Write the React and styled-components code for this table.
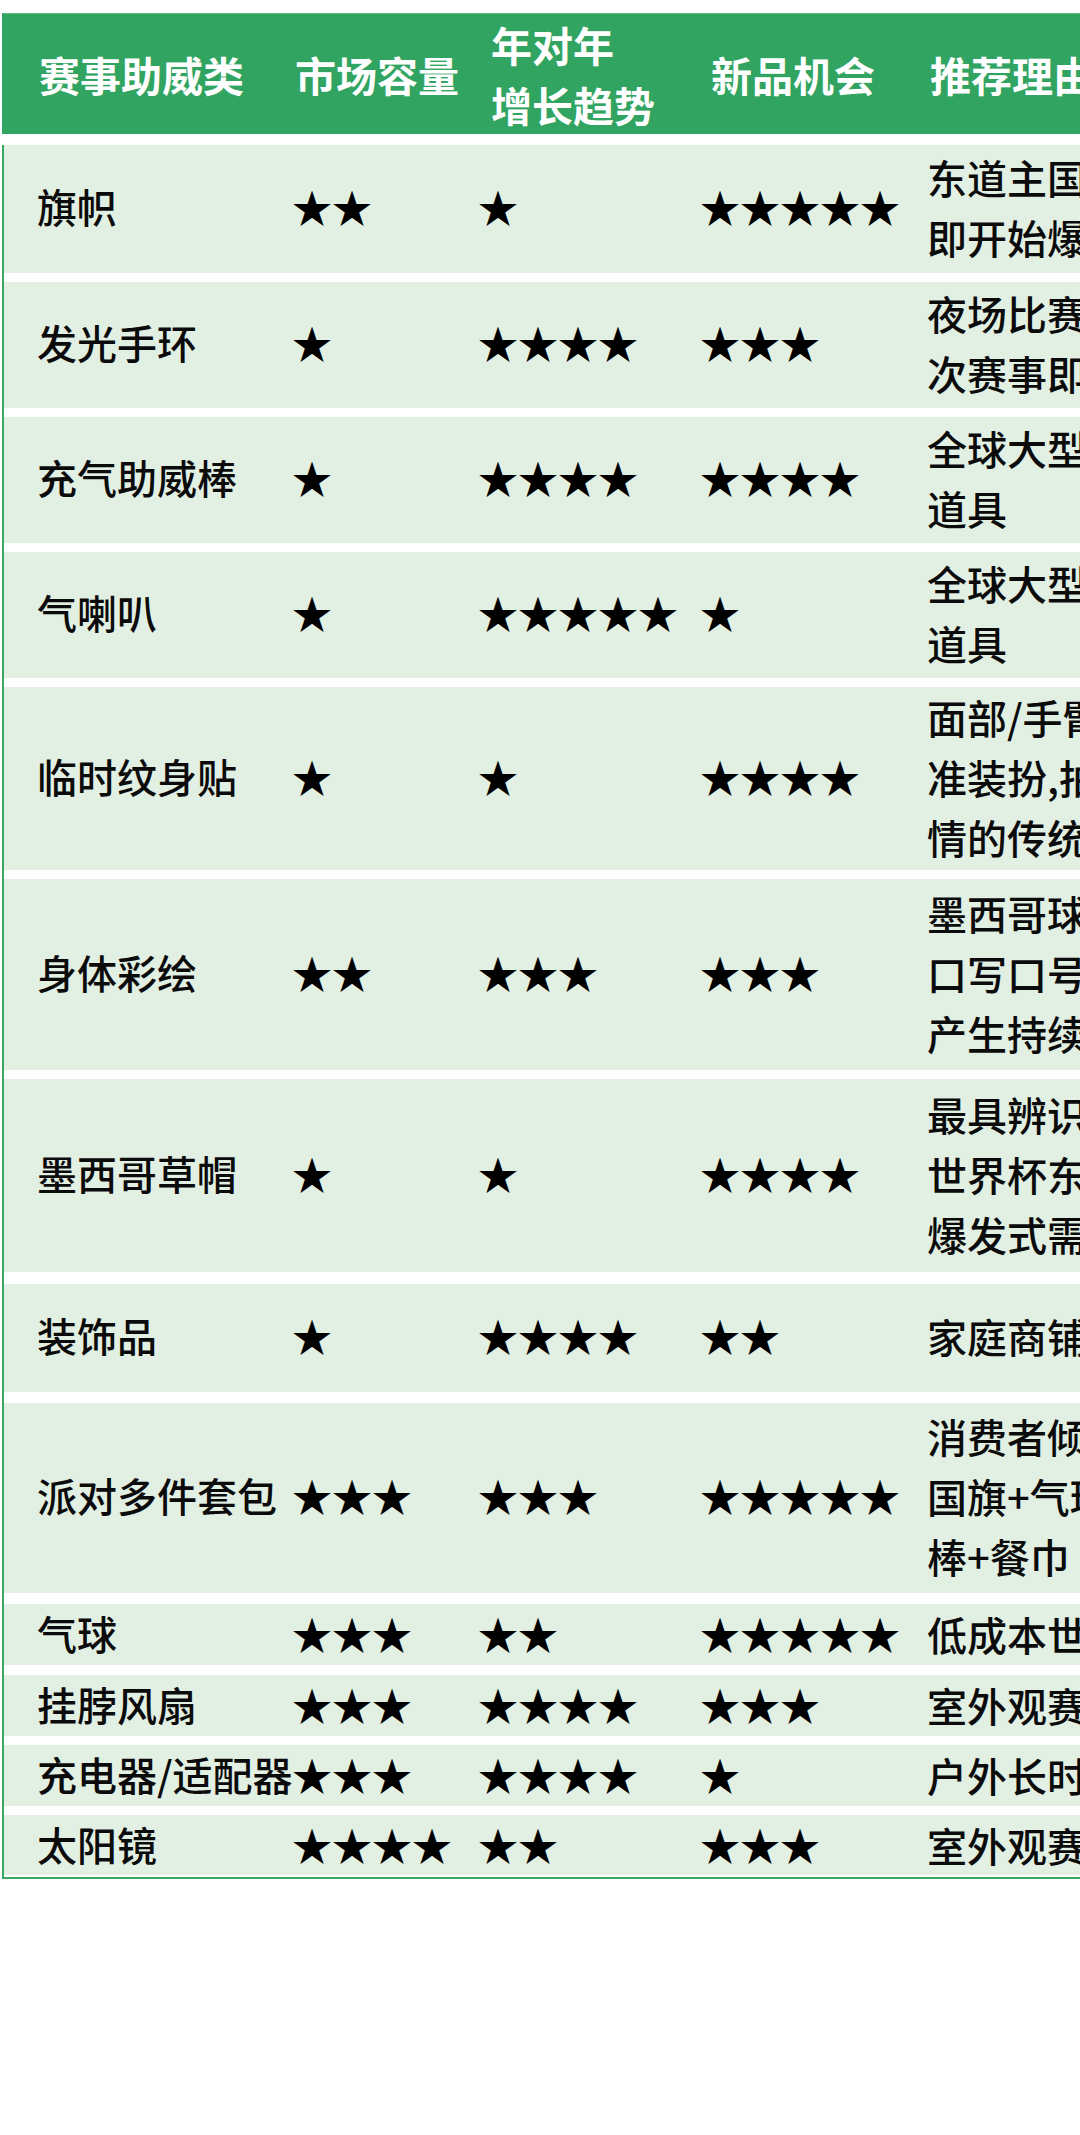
import React from "react";
import styled, { createGlobalStyle } from "styled-components";

const GlobalStyle = createGlobalStyle`
    html, body {
        margin: 0;
        padding: 0;
        background: #ffffff;
    }
    body {
        font-family: "Noto Sans CJK SC", "Noto Sans", sans-serif;
        color: #0b0b0b;
    }
`;

// column widths shared by the header and the body rows
const COLS = "276px 185px 223px 227px 760px";

const Page = styled.div`
    width: 1080px;
    overflow: hidden;
    padding-top: 13px;
    padding-bottom: 250px;
`;

const Table = styled.div`
    width: 1675px;
    margin-left: 2px;
`;

const HeadRow = styled.div`
    display: grid;
    grid-template-columns: ${COLS};
    height: 120px;
    background: #32a462;
    border-top: 1px solid #62bd87;
    border-left: 2px solid #32a462;
`;

const HeadCell = styled.div`
    display: flex;
    flex-direction: column;
    justify-content: center;
    padding: 0 0 12px ${(p) => p.$pad}px;
    font-size: 41px;
    font-weight: 700;
    line-height: 60px;
    color: #ffffff;
    white-space: nowrap;
`;

const Body = styled.div`
    border-left: 2px solid #3aa865;
    border-bottom: 2px solid #3aa865;
    padding-bottom: 2px;
`;

const Row = styled.div`
    display: grid;
    grid-template-columns: ${COLS};
    height: ${(p) => p.$h}px;
    margin-top: ${(p) => p.$gap}px;
    background: #e2efe3;
`;

const Cell = styled.div`
    display: flex;
    align-items: center;
    padding: 0 0 6px ${(p) => p.$pad}px;
    font-size: 40px;
    font-weight: 500;
    line-height: 48px;
    white-space: nowrap;
`;

const Stars = styled(Cell)`
    font-family: "Noto Sans CJK SC", sans-serif;
    font-weight: 400;
    color: #000000;
`;

const Reason = styled.div`
    display: flex;
    flex-direction: column;
    justify-content: center;
    padding: 0 0 4px 12px;
    font-size: 40px;
    font-weight: 500;
    line-height: 60px;
    white-space: nowrap;
`;

const headers = [
    { pad: 35, lines: ["赛事助威类"] },
    { pad: 15, lines: ["市场容量"] },
    { pad: 26, lines: ["年对年", "增长趋势"] },
    { pad: 23, lines: ["新品机会"] },
    { pad: 15, lines: ["推荐理由"] },
];

const rows = [
    { name: "旗帜", s: [2, 1, 5], h: 128, gap: 11,
      why: ["东道主国家球迷刚需，开幕前", "即开始爆发式增长"] },
    { name: "发光手环", s: [1, 4, 3], h: 126, gap: 9,
      why: ["夜场比赛氛围道具，场馆多", "次赛事即可复购"] },
    { name: "充气助威棒", s: [1, 4, 4], h: 126, gap: 9,
      why: ["全球大型赛事通用的助威", "道具"] },
    { name: "气喇叭", s: [1, 5, 1], h: 126, gap: 9,
      why: ["全球大型赛事通用的助威", "道具"] },
    { name: "临时纹身贴", s: [1, 1, 4], h: 183, gap: 9,
      why: ["面部/手臂彩绘贴是球迷标", "准装扮,拍照分享传递热", "情的传统方式"] },
    { name: "身体彩绘", s: [2, 3, 3], h: 191, gap: 9,
      why: ["墨西哥球迷习惯脸上画旗、胸", "口写口号，每场比赛都会", "产生持续需求"] },
    { name: "墨西哥草帽", s: [1, 1, 4], h: 193, gap: 9,
      why: ["最具辨识度的墨西哥元素，", "世界杯东道主效应带来", "爆发式需求"] },
    { name: "装饰品", s: [1, 4, 2], h: 108, gap: 12,
      why: ["家庭商铺装饰需求"] },
    { name: "派对多件套包", s: [3, 3, 5], h: 190, gap: 11,
      why: ["消费者倾向一站式购买，", "国旗+气球+助威", "棒+餐巾"] },
    { name: "气球", s: [3, 2, 5], h: 61, gap: 11,
      why: ["低成本世界杯氛围道具"] },
    { name: "挂脖风扇", s: [3, 4, 3], h: 61, gap: 10,
      why: ["室外观赛防暑需求"] },
    { name: "充电器/适配器", s: [3, 4, 1], h: 61, gap: 9,
      why: ["户外长时间观赛需求"] },
    { name: "太阳镜", s: [4, 2, 3], h: 60, gap: 9,
      why: ["室外观赛防晒需求"] },
];

const starPad = [12, 13, 12];

const App = () => {
    return (
        <Page>
            <GlobalStyle />
            <Table>
                <HeadRow>
                    {headers.map((hd, i) => (
                        <HeadCell key={i} $pad={hd.pad}>
                            {hd.lines.map((l) => (
                                <span key={l}>{l}</span>
                            ))}
                        </HeadCell>
                    ))}
                </HeadRow>
                <Body>
                    {rows.map((r) => (
                        <Row key={r.name} $h={r.h} $gap={r.gap}>
                            <Cell $pad={33}>{r.name}</Cell>
                            {r.s.map((n, i) => (
                                <Stars key={i} $pad={starPad[i]}>
                                    {"★".repeat(n)}
                                </Stars>
                            ))}
                            <Reason>
                                {r.why.map((l, i) => (
                                    <span key={i}>{l}</span>
                                ))}
                            </Reason>
                        </Row>
                    ))}
                </Body>
            </Table>
        </Page>
    );
};

export default App;
